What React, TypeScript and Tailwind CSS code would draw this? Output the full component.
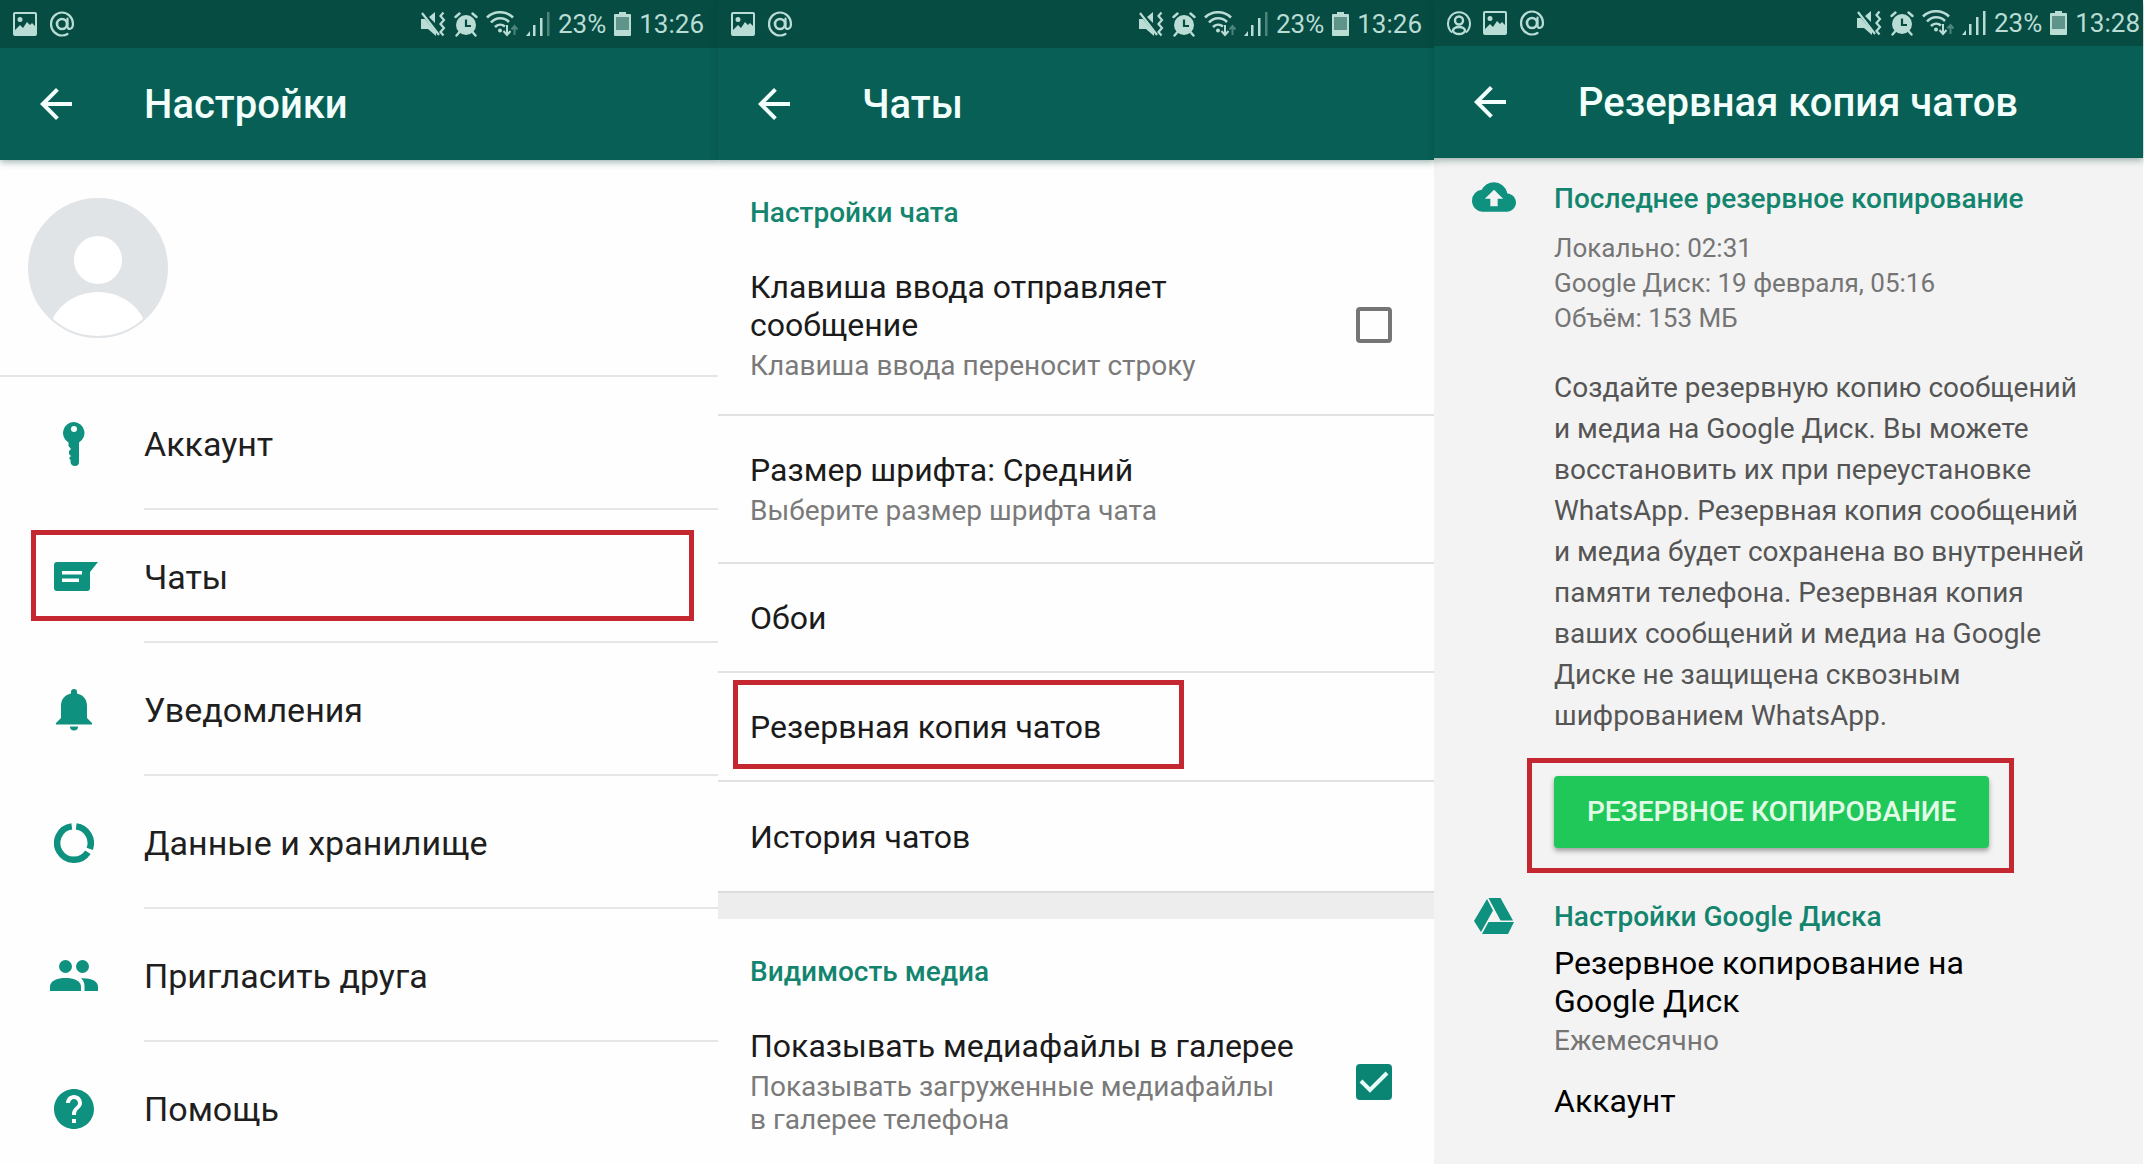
import React from "react";
import { MdArrowBack, MdCloudUpload, MdHelp } from "react-icons/md";

/* ---------- Status bar icons ---------- */

const PictureIcon = () => (
  <svg width="24" height="24" viewBox="0 0 24 24" aria-hidden="true">
    <path
      fill="currentColor"
      fillRule="evenodd"
      d="M2 0h20a2 2 0 0 1 2 2v20a2 2 0 0 1-2 2H2a2 2 0 0 1-2-2V2a2 2 0 0 1 2-2Zm0 2v16l5-5 3 3 4-6 3 3 2-2 3 3V2H2Zm5 3a2.500 2.500 0 1 1 0 5a2.500 2.500 0 0 1 0-5Z"
    />
  </svg>
);

const AtIcon = () => (
  <svg width="26" height="26" viewBox="0 0 26 26" fill="none" stroke="currentColor" aria-hidden="true">
    <circle cx="13" cy="13" r="5" strokeWidth="2.600" />
    <path
      strokeWidth="2.200"
      strokeLinecap="round"
      d="M18.500 7.500v8c0 4 5.500 3 5.500-2.500A11 11.500 0 1 0 13 24.500c2 0 4-.5 5.500-1.500"
    />
  </svg>
);

const PersonIcon = () => (
  <svg width="24" height="26" viewBox="1 0 24 26" fill="none" stroke="currentColor" aria-hidden="true">
    <path strokeWidth="2" d="M6 22.500a11 11.500 0 1 1 14 0" />
    <circle cx="13" cy="10.500" r="4" strokeWidth="2.400" />
    <ellipse cx="13" cy="20.500" rx="6" ry="3.500" strokeWidth="2.400" />
  </svg>
);

const MuteIcon = () => (
  <svg width="26" height="26" viewBox="0 0 26 26" aria-hidden="true">
    <path fill="currentColor" d="M1 8h4l11 13v4L8 18H1V8ZM9 6l6-5v11L9 6Z" />
    <path stroke="currentColor" strokeWidth="2.200" d="M2 2l17 22" />
    <path
      fill="none"
      stroke="currentColor"
      strokeWidth="2.200"
      d="M23.500 1.500l-3 3.500 3.500 4-3.500 4 3.500 4-3.500 4 3 3.500"
    />
  </svg>
);

const AlarmIcon = () => (
  <svg width="24" height="25" viewBox="0 0 24 25" aria-hidden="true">
    <circle cx="12" cy="13" r="10" fill="currentColor" />
    <path
      stroke="currentColor"
      strokeWidth="2.400"
      strokeLinecap="round"
      d="M1.500 5l4-3.500M22.500 5l-4-3.500M5.500 20l-3 3.500M18.500 20l3 3.500"
    />
    <path fill="none" stroke="#064c42" strokeWidth="2.200" d="M12 7.500V14h5" />
  </svg>
);

const WifiIcon = () => (
  <svg width="32" height="26" viewBox="0 0 32 26" fill="none" stroke="currentColor" aria-hidden="true">
    <path strokeWidth="2.600" d="M1 6.500C8-.5 20-.5 27 6.500M5 11.500c5-5.500 13-5.500 18-.5M9 16c3-3 7-3 10-.5" />
    <circle cx="14" cy="19.500" r="2" fill="currentColor" stroke="none" />
    <path strokeWidth="2" d="M21 14v9M17.500 20l3.500 4 3.500-4" />
    <path strokeWidth="2" opacity=".4" d="M28.500 24v-8M25.500 18.500l3-3.500 3 3.500" />
  </svg>
);

const SignalIcon = ({ full }: { full?: boolean }) => (
  <svg width="24" height="24" viewBox="0 0 24 24" fill="currentColor" aria-hidden="true">
    <path d="M0 24l4-5v5ZM7 13h2.500v11H7ZM14 6h2.500v18H14Z" />
    <path d="M21 0h2.500v24H21Z" opacity={full ? 1 : 0.4} />
  </svg>
);

const BatteryIcon = () => (
  <svg width="17" height="24" viewBox="0 0 17 24" fill="currentColor" aria-hidden="true">
    <path d="M5 0h7v2h4a1 1 0 0 1 1 1v20a1 1 0 0 1-1 1H1a1 1 0 0 1-1-1V3a1 1 0 0 1 1-1h4Z" />
    <path fill="#064c42" opacity=".5" d="M2 5h13v13H2Z" />
  </svg>
);

/* ---------- Menu icons ---------- */

const KeyIcon = () => (
  <svg width="24" height="44" viewBox="0 0 24 44" aria-hidden="true">
    <path
      fill="currentColor"
      fillRule="evenodd"
      d="M12 0a11 11 0 0 1 5 20.500V40q0 4-4 4t-4.500-4v-2l-1.500-2 2-2-2-2v-3l2-2-2.500-3v-3.500A11 11 0 0 1 12 0Zm0 4a3 3 0 1 0 0 6a3 3 0 0 0 0-6Z"
    />
  </svg>
);

const ChatIcon = () => (
  <svg width="48" height="29" viewBox="-4 0 48 29" aria-hidden="true">
    <path fill="currentColor" d="M3 0h41l-8 10v16a3 3 0 0 1-3 3H3a3 3 0 0 1-3-3V3a3 3 0 0 1 3-3Z" />
    <path fill="#fff" d="M8 9h20v3.500H8ZM8 16.500h17V20H8Z" />
  </svg>
);

const BellIcon = () => (
  <svg width="36" height="42" viewBox="0 0 36 42" fill="currentColor" aria-hidden="true">
    <path d="M15 3a3 3 0 0 1 6 0v1.500C27 6 31 10 31 17v12l5 5v1.500H0V34l5-5V17C5 10 9 6 15 4.500Z" />
    <path d="M14 37.500h8a4 4 0 0 1-8 0Z" />
  </svg>
);

const UsageIcon = () => (
  <svg width="40" height="40" viewBox="0 0 40 40" fill="none" stroke="currentColor" strokeWidth="6.500" aria-hidden="true">
    <path d="M22.200 3.400A16.750 16.750 0 0 1 35.700 25.900" />
    <path d="M33.900 29.200A16.750 16.750 0 1 1 17.800 3.400" />
  </svg>
);

const PeopleIcon = () => (
  <svg width="48" height="31" viewBox="0 0 48 31" fill="currentColor" aria-hidden="true">
    <circle cx="15.500" cy="6.500" r="6.500" />
    <circle cx="32.500" cy="6.500" r="6.500" />
    <path d="M0 31v-4.500C0 20.500 8 18 15.500 18S31 20.500 31 26.500V31Z" />
    <path d="M34.500 31v-5c0-3.500-1.500-6-3.500-7.800 9-.5 17 2.300 17 8.300V31Z" />
  </svg>
);

const DriveIcon = () => (
  <svg width="40" height="36" viewBox="0 0 40 36" fill="currentColor" aria-hidden="true">
    <path d="M13 1l6 11.500L7 34 0 23ZM14.500 0h12L39 22.500H26.500ZM14.500 24H40l-6 12H8Z" />
  </svg>
);

const Avatar = () => (
  <svg width="140" height="140" viewBox="0 0 140 140" role="img" aria-label="Фото профиля">
    <clipPath id="avatar">
      <circle cx="70" cy="70" r="69" />
    </clipPath>
    <circle cx="70" cy="70" r="69" fill="#e1e4e7" />
    <circle cx="70" cy="62" r="24" fill="#fff" />
    <ellipse cx="70" cy="140" rx="50" ry="46" fill="#fff" clipPath="url(#avatar)" />
    <circle cx="70" cy="70" r="69" fill="none" stroke="#e1e4e7" strokeWidth="2" />
  </svg>
);

/* ---------- Shared parts ---------- */

interface TopProps {
  title: string;
  time: string;
  statusClass: string;
  person?: boolean;
}

const Top: React.FC<TopProps> = ({ title, time, statusClass, person }) => (
  <header className="relative z-10 bg-[#085f55] shadow-[0_2px_7px_rgba(0,60,50,0.4)]">
    <div
      className={`flex items-center justify-between bg-[#064c42] pl-[13px] text-[26px] text-[#b9dcd5] ${statusClass}`}
    >
      <div className="flex items-center gap-3">
        {person && <PersonIcon />}
        <PictureIcon />
        <AtIcon />
      </div>
      <div className="flex items-center gap-2">
        <MuteIcon />
        <AlarmIcon />
        <WifiIcon />
        <SignalIcon full={person} />
        <span>23%</span>
        <BatteryIcon />
        <span>{time}</span>
      </div>
    </div>
    <div className="flex h-28 items-center gap-16 pl-8 text-[#f2fffc]">
      <button type="button" aria-label="Назад">
        <MdArrowBack size={48} />
      </button>
      <h1 className="pt-0.5 text-[40px] font-medium">{title}</h1>
    </div>
  </header>
);

const Highlight = ({ className }: { className: string }) => (
  <span className={`pointer-events-none absolute border-5 border-[#c4272f] ${className}`} />
);

const SectionTitle = ({ children }: { children: React.ReactNode }) => (
  <h2 className="text-[28px] leading-8 font-medium text-[#13856f]">{children}</h2>
);

/* ---------- Settings ---------- */

const menu = [
  { label: "Аккаунт", icon: <KeyIcon /> },
  { label: "Чаты", icon: <ChatIcon />, marked: true },
  { label: "Уведомления", icon: <BellIcon /> },
  { label: "Данные и хранилище", icon: <UsageIcon /> },
  { label: "Пригласить друга", icon: <PeopleIcon /> },
  { label: "Помощь", icon: <MdHelp size={48} /> },
];

const Settings: React.FC = () => (
  <section className="bg-[#fefefe]">
    <Top title="Настройки" time="13:26" statusClass="h-12 pr-3.5" />
    <div className="flex h-[217px] items-center border-b-2 border-[#e6e6e6] pl-7">
      <Avatar />
    </div>
    <nav>
      {menu.map((item) => (
        <a key={item.label} href="#" className="relative flex h-[133px]">
          <span className="flex w-36 items-center justify-center pl-1 text-[#0f917f]">
            {item.icon}
          </span>
          <span className="flex flex-1 items-center border-b-2 border-[#e6e6e6] pt-1 text-[34px] text-[#1f1f1f]">
            {item.label}
          </span>
          {item.marked && <Highlight className="top-5 right-6 bottom-[22px] left-[31px]" />}
        </a>
      ))}
    </nav>
  </section>
);

/* ---------- Chats ---------- */

interface CheckRowProps {
  id: string;
  title: string;
  note: string;
  checked?: boolean;
}

const CheckRow: React.FC<CheckRowProps> = ({ id, title, note, checked }) => (
  <div className="flex items-center gap-12 border-b-2 border-[#e2e2e2] pt-[39px] pr-[42px] pb-8 pl-8">
    <label htmlFor={id} className="flex-1">
      <span className="block text-[32px] leading-[38px] text-[#1b1b1b]">{title}</span>
      <span className="mt-[5px] block text-[28px] leading-[33px] text-[#7a7a7a]">{note}</span>
    </label>
    <span className="relative flex size-9">
      <input
        id={id}
        type="checkbox"
        defaultChecked={checked}
        className="peer size-9 appearance-none rounded-sm border-4 border-[#757575] checked:border-[#0b8573] checked:bg-[#0b8573]"
      />
      <svg
        viewBox="0 0 36 36"
        className="pointer-events-none absolute inset-0 hidden peer-checked:block"
        fill="none"
        stroke="#e9fffa"
        strokeWidth="4"
        aria-hidden="true"
      >
        <path d="M5 17l9 9L31 9" />
      </svg>
    </span>
  </div>
);

const Chats: React.FC = () => (
  <section className="bg-[#fefefe]">
    <Top title="Чаты" time="13:26" statusClass="h-12 pr-3" />
    <div className="pt-[37px] pl-8">
      <SectionTitle>Настройки чата</SectionTitle>
    </div>
    <CheckRow
      id="enter-sends"
      title="Клавиша ввода отправляет сообщение"
      note="Клавиша ввода переносит строку"
    />
    <a
      href="#"
      className="flex h-[148px] flex-col justify-center border-b-2 border-[#e2e2e2] pl-8"
    >
      <span className="text-[32px] leading-[38px] text-[#1b1b1b]">Размер шрифта: Средний</span>
      <span className="mt-[5px] text-[28px] leading-[33px] text-[#7a7a7a]">
        Выберите размер шрифта чата
      </span>
    </a>
    <div className="divide-y-2 divide-[#e2e2e2]">
      {["Обои", "Резервная копия чатов", "История чатов"].map((label) => (
        <a
          key={label}
          href="#"
          className="relative flex h-[109px] items-center pl-8 text-[32px] text-[#1b1b1b]"
        >
          {label}
          {label === "Резервная копия чатов" && (
            <Highlight className="top-[7px] bottom-[11px] left-[15px] w-[451px]" />
          )}
        </a>
      ))}
    </div>
    <div className="h-7 border-t-2 border-[#dcdcdc] bg-[#ededed]" />
    <div className="pt-[37px] pl-8">
      <SectionTitle>Видимость медиа</SectionTitle>
    </div>
    <CheckRow
      id="show-media"
      title="Показывать медиафайлы в галерее"
      note={"Показывать загруженные медиафайлы в\u00a0галерее телефона"}
      checked
    />
  </section>
);

/* ---------- Backup ---------- */

const Backup: React.FC = () => (
  <section className="border-r border-white bg-[#f3f3f3]">
    <Top title="Резервная копия чатов" time="13:28" statusClass="h-[46px] pr-[3px]" person />

    <div className="flex pt-[25px] pr-14">
      <div className="flex w-[120px] shrink-0 pl-[38px] text-[#0f917f]">
        <MdCloudUpload size={44} className="-mt-2" />
      </div>
      <div className="flex-1">
        <SectionTitle>Последнее резервное копирование</SectionTitle>
        <p className="mt-4 text-[26px] leading-[35px] text-[#757575]">
          Локально: 02:31
          <br />
          Google Диск: 19 февраля, 05:16
          <br />
          Объём: 153 МБ
        </p>
        <p className="mt-[31px] text-[28px] leading-[41px] text-[#555555]">
          Создайте резервную копию сообщений и медиа на Google Диск. Вы можете
          восстановить их при переустановке WhatsApp. Резервная копия сообщений
          и медиа будет сохранена во внутренней памяти телефона. Резервная
          копия ваших сообщений и медиа на Google Диске не защищена сквозным
          шифрованием WhatsApp.
        </p>
        <div className="relative mt-10 inline-flex">
          <button
            type="button"
            className="h-[72px] rounded-sm bg-[#20c85a] px-[33px] text-[28px] font-medium text-[#e2fbe6] shadow-[0_3px_5px_rgba(0,0,0,0.35)]"
          >
            РЕЗЕРВНОЕ КОПИРОВАНИЕ
          </button>
          <Highlight className="-top-[18px] -right-[25px] -bottom-[25px] -left-[27px]" />
        </div>
      </div>
    </div>

    <div className="flex pt-[53px]">
      <div className="flex w-[120px] shrink-0 pl-10 text-[#0f917f]">
        <div className="-mt-[3px]">
          <DriveIcon />
        </div>
      </div>
      <div className="flex-1">
        <SectionTitle>Настройки Google Диска</SectionTitle>
        <a href="#" className="mt-[11px] block">
          <span className="block text-[32px] leading-[38px] text-black">
            Резервное копирование на
            <br />
            Google Диск
          </span>
          <span className="mt-1 block text-[28px] leading-[33px] text-[#757575]">Ежемесячно</span>
        </a>
        <a href="#" className="mt-[25px] block text-[32px] leading-[38px] text-black">
          Аккаунт
        </a>
      </div>
    </div>
  </section>
);

const App: React.FC = () => {
  return (
    <main className="grid h-screen grid-cols-[718fr_716fr_710fr] overflow-hidden font-['Roboto',sans-serif]">
      <Settings />
      <Chats />
      <Backup />
    </main>
  );
};

export default App;
